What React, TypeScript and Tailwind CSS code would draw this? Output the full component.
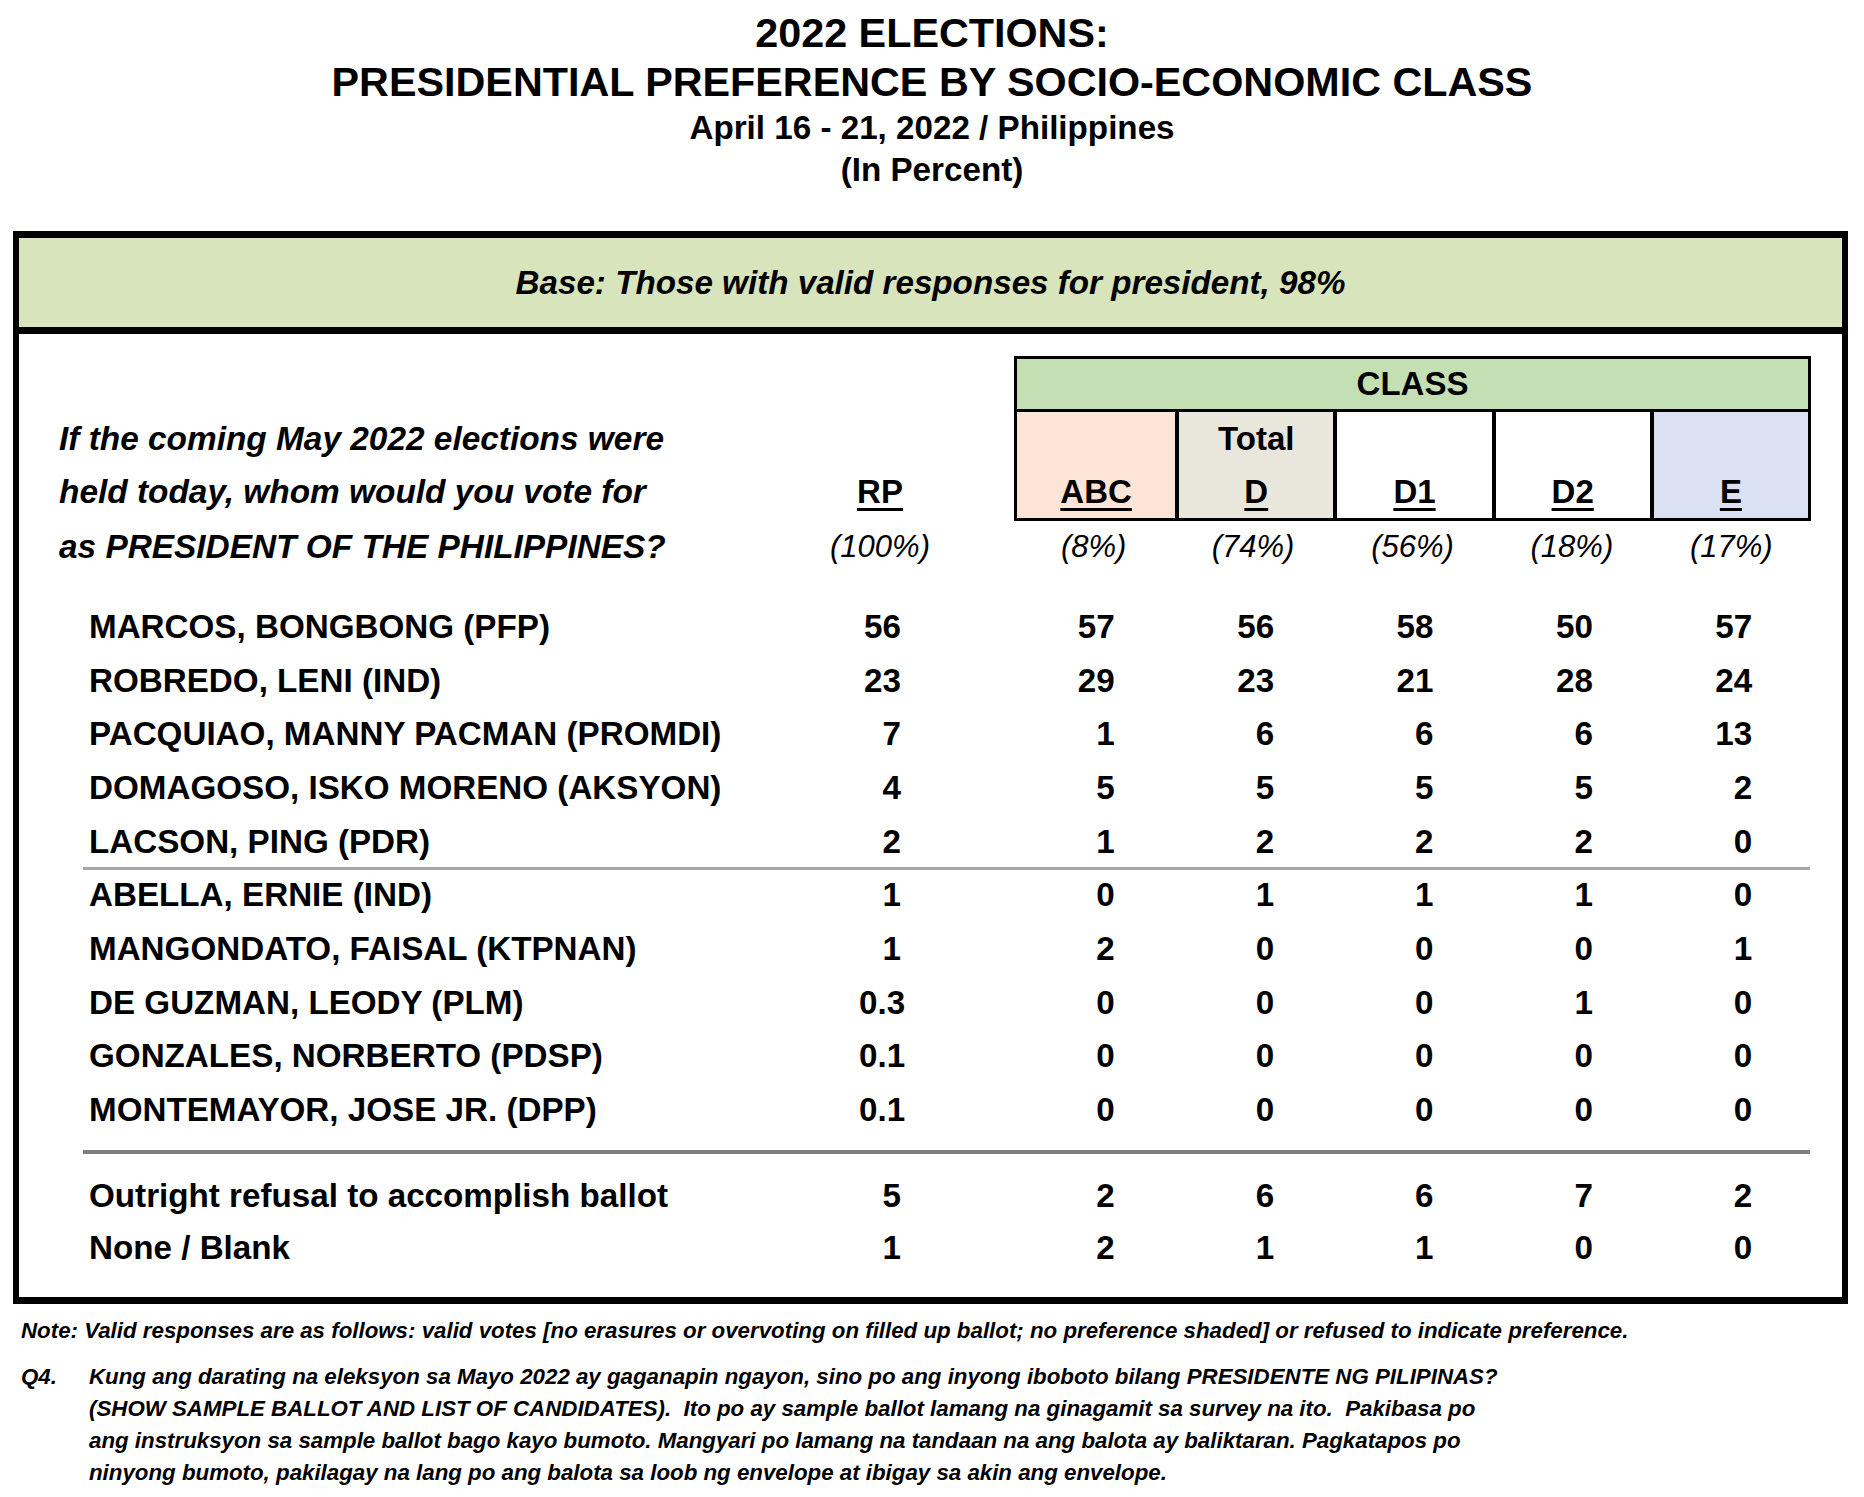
import React from "react";

type Row = { name: string; rp: string; cls: string[] };

const topRows: Row[] = [
  { name: "MARCOS, BONGBONG (PFP)", rp: "56", cls: ["57", "56", "58", "50", "57"] },
  { name: "ROBREDO, LENI (IND)", rp: "23", cls: ["29", "23", "21", "28", "24"] },
  { name: "PACQUIAO, MANNY PACMAN (PROMDI)", rp: "7", cls: ["1", "6", "6", "6", "13"] },
  { name: "DOMAGOSO, ISKO MORENO (AKSYON)", rp: "4", cls: ["5", "5", "5", "5", "2"] },
  { name: "LACSON, PING (PDR)", rp: "2", cls: ["1", "2", "2", "2", "0"] },
];

const lowRows: Row[] = [
  { name: "ABELLA, ERNIE (IND)", rp: "1", cls: ["0", "1", "1", "1", "0"] },
  { name: "MANGONDATO, FAISAL (KTPNAN)", rp: "1", cls: ["2", "0", "0", "0", "1"] },
  { name: "DE GUZMAN, LEODY (PLM)", rp: "0.3", cls: ["0", "0", "0", "1", "0"] },
  { name: "GONZALES, NORBERTO (PDSP)", rp: "0.1", cls: ["0", "0", "0", "0", "0"] },
  { name: "MONTEMAYOR, JOSE JR. (DPP)", rp: "0.1", cls: ["0", "0", "0", "0", "0"] },
];

const otherRows: Row[] = [
  { name: "Outright refusal to accomplish ballot", rp: "5", cls: ["2", "6", "6", "7", "2"] },
  { name: "None / Blank", rp: "1", cls: ["2", "1", "1", "0", "0"] },
];

const Num = ({ v }: { v: string }) => (
  <div className="flex justify-center">
    <span className="block w-[42px] text-right whitespace-nowrap">{v}</span>
  </div>
);

const DataRow = ({ row, h }: { row: Row; h: string }) => (
  <div className={`flex items-center font-bold text-[33.2px] ${h}`}>
    <div className="w-[781px] pl-[70px] whitespace-nowrap">{row.name}</div>
    <div className="w-[160px]">
      <Num v={row.rp} />
    </div>
    <div className="w-[54px]" />
    <div className="w-[797px] grid grid-cols-5">
      {row.cls.map((v, i) => (
        <Num key={i} v={v} />
      ))}
    </div>
  </div>
);

const subHeads = [
  { top: "", label: "ABC", bg: "bg-[#fce4d6]" },
  { top: "Total", label: "D", bg: "bg-[#e9e7dc]" },
  { top: "", label: "D1", bg: "bg-white" },
  { top: "", label: "D2", bg: "bg-white" },
  { top: "", label: "E", bg: "bg-[#d9e1f2]" },
];

export default function App() {
  return (
    <div className="w-[1864px] h-[1497px] bg-white text-black font-['Liberation_Sans',Arial,sans-serif]">
      {/* Title */}
      <div className="pt-[9px] text-center font-bold">
        <p className="text-[41.3px] leading-[48px]">2022 ELECTIONS:</p>
        <p className="text-[41.3px] leading-[50px]">PRESIDENTIAL PREFERENCE BY SOCIO-ECONOMIC CLASS</p>
        <p className="text-[33.2px] leading-[42px]">April 16 - 21, 2022 / Philippines</p>
        <p className="text-[33.2px] leading-[42px]">(In Percent)</p>
      </div>

      {/* Table box */}
      <div className="mt-[40px] ml-[13px] w-[1835px] border-x-[6px] border-y-[7px] border-black">
        <div className="h-[96px] bg-[#d8e4bc] border-b-[7px] border-black flex items-center justify-center">
          <p className="text-[33.2px] font-bold italic">Base: Those with valid responses for president, 98%</p>
        </div>

        <div className="pb-[23px]">
          {/* Header */}
          <div className="flex h-[187px]">
            <div className="w-[781px] pl-[40px] pb-[3px] flex flex-col justify-end font-bold italic text-[33.4px]">
              <p className="leading-[53px]">If the coming May 2022 elections were</p>
              <p className="leading-[53px]">held today, whom would you vote for</p>
            </div>
            <div className="w-[160px] pb-[3px] flex flex-col justify-end items-center font-bold text-[33px]">
              <p className="leading-[53px] underline decoration-[3px] underline-offset-[5px]">RP</p>
            </div>
            <div className="w-[54px]" />
            <div className="mt-[22px] w-[797px] h-[165px] border-[3px] border-black flex flex-col font-bold text-[33px]">
              <div className="h-[54px] bg-[#c5dfb4] border-b-[3px] border-black flex items-center justify-center">
                CLASS
              </div>
              <div className="flex-1 grid grid-cols-5">
                {subHeads.map((s, i) => (
                  <div
                    key={s.label}
                    className={`${s.bg} ${i > 0 ? "border-l-[4px] border-black" : ""} flex flex-col items-center`}
                  >
                    <p className="leading-[53px] h-[53px]">{s.top}</p>
                    <p className="leading-[53px] underline decoration-[3px] underline-offset-[5px]">{s.label}</p>
                  </div>
                ))}
              </div>
            </div>
          </div>

          {/* Base sizes */}
          <div className="flex items-center h-[53px]">
            <div className="w-[781px] pl-[40px] font-bold italic whitespace-nowrap text-[33.4px]">
              as PRESIDENT OF THE PHILIPPINES?
            </div>
            <div className="w-[160px] text-center italic text-[31px]">(100%)</div>
            <div className="w-[54px]" />
            <div className="w-[797px] grid grid-cols-5 text-center italic text-[31px]">
              <span>(8%)</span>
              <span>(74%)</span>
              <span>(56%)</span>
              <span>(18%)</span>
              <span>(17%)</span>
            </div>
          </div>

          <div className="h-[26px]" />

          {topRows.map((r) => (
            <DataRow key={r.name} row={r} h="h-[53.7px]" />
          ))}
          <div className="-my-[1.5px] ml-[64px] w-[1727px] h-[3px] bg-[#a6a6a6]" />
          {lowRows.map((r) => (
            <DataRow key={r.name} row={r} h="h-[53.7px]" />
          ))}

          <div className="mt-[13px] ml-[64px] w-[1727px] h-[4px] bg-[#808080]" />
          <div className="h-[16px]" />
          {otherRows.map((r) => (
            <DataRow key={r.name} row={r} h="h-[52px]" />
          ))}
        </div>
      </div>

      {/* Footnotes */}
      <div className="mt-[11px] pl-[21px] font-bold italic text-[22.3px]">
        <p className="leading-[32px] whitespace-nowrap">
          Note: Valid responses are as follows: valid votes [no erasures or overvoting on filled up ballot; no preference shaded] or refused to indicate preference.
        </p>
        <div className="mt-[14px] flex">
          <span className="w-[68px] shrink-0 leading-[32px]">Q4.</span>
          <div className="whitespace-pre">
            <p className="leading-[32px]">Kung ang darating na eleksyon sa Mayo 2022 ay gaganapin ngayon, sino po ang inyong iboboto bilang PRESIDENTE NG PILIPINAS?</p>
            <p className="leading-[32px]">(SHOW SAMPLE BALLOT AND LIST OF CANDIDATES).  Ito po ay sample ballot lamang na ginagamit sa survey na ito.  Pakibasa po</p>
            <p className="leading-[32px]">ang instruksyon sa sample ballot bago kayo bumoto. Mangyari po lamang na tandaan na ang balota ay baliktaran. Pagkatapos po</p>
            <p className="leading-[32px]">ninyong bumoto, pakilagay na lang po ang balota sa loob ng envelope at ibigay sa akin ang envelope.</p>
          </div>
        </div>
      </div>
    </div>
  );
}
